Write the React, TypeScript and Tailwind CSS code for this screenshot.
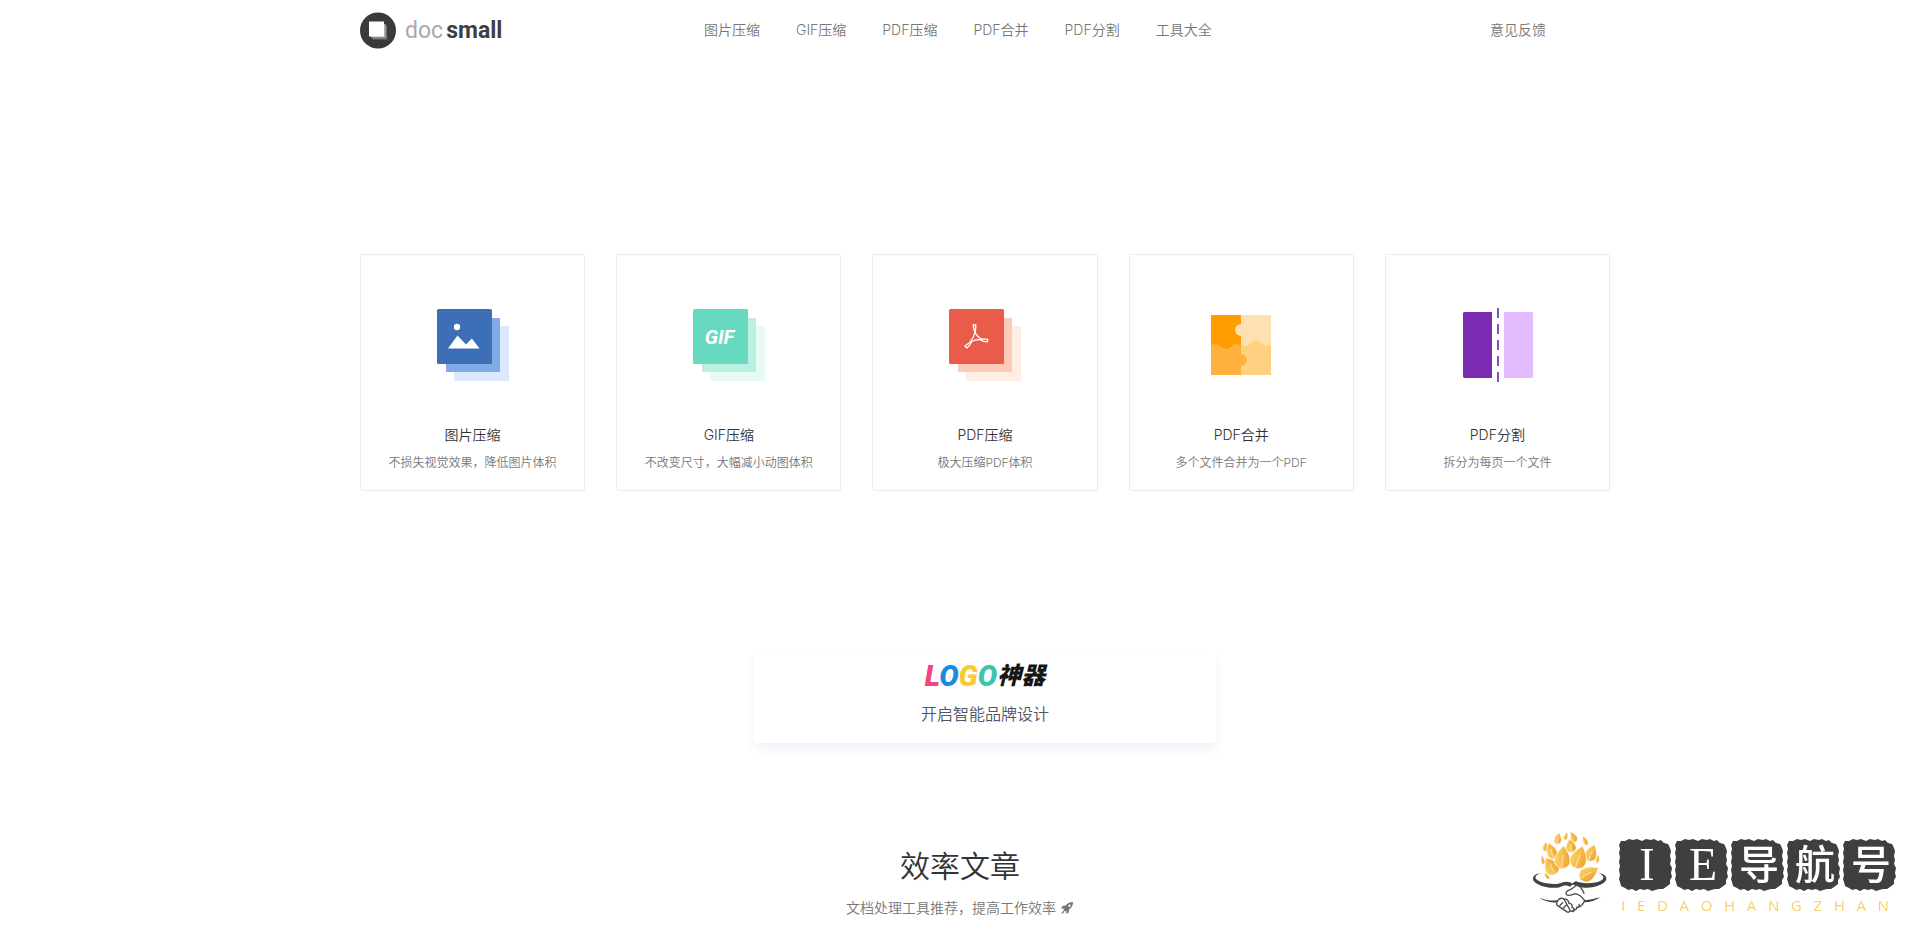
import type { ReactNode } from "react";

interface Tool {
  title: string;
  description: string;
  icon: ReactNode;
}

interface StackIconProps {
  front: string;
  middle: string;
  back: string;
  children: ReactNode;
}

function StackIcon({ front, middle, back, children }: StackIconProps) {
  return (
    <svg width="72" height="73" viewBox="0 0 72 73" aria-hidden="true">
      <rect x="17" y="17" width="55" height="55" rx="1" fill={back} />
      <rect x="9" y="9" width="54" height="54" rx="1" fill={middle} />
      <rect width="55" height="55" rx="1.5" fill={front} />
      {children}
    </svg>
  );
}

function ImageIcon() {
  return (
    <StackIcon front="#3c6fb5" middle="#80abe8" back="#dbe9fd">
      <circle cx="20" cy="18" r="3.2" fill="#fff" />
      <path d="M11 39.5 20.5 26.5 29 35.5 34.8 29.5 42.5 39.5Z" fill="#fff" />
    </StackIcon>
  );
}

function GifIcon() {
  return (
    <StackIcon front="#66d9c0" middle="#baf0e1" back="#e6fbf4">
      <text x="26.5" y="35" textAnchor="middle" fill="#fff" className="font-['Roboto',sans-serif] text-[20px] font-bold italic">
        GIF
      </text>
    </StackIcon>
  );
}

function PdfIcon() {
  return (
    <StackIcon front="#ea5c4a" middle="#fdcab8" back="#ffece5">
      <g fill="none" stroke="#fff" strokeWidth="1.3" strokeLinejoin="round">
        <path d="M24.2 16h2.6c.2 2.7-.3 5-.8 7.4-.8-2-1.8-4.7-1.8-7.4z" />
        <path d="M26 23c1.4 3.4 3.8 6 7 7 2 .3 4.3-.2 5.800.3l-.5 2.600c-3 .1-5.300-1.100-7.300-2.300" />
        <path d="M26 23c-.6 3.4-2.7 7.4-4.7 9.8-1.5 1.8-4.3 3-5.300 4.600l2 1.600c2.200-1.600 3.400-3.800 4.600-6" />
        <path d="M21.3 33c3-1.6 7.4-2.4 11.7-2.6" />
      </g>
    </StackIcon>
  );
}

function MergeIcon() {
  return (
    <svg width="60" height="60" viewBox="0 0 60 60" aria-hidden="true">
      <path d="M0 0h30v32H0z" fill="#ff9d00" />
      <path d="M30 0h30v32H30V21a6 6 0 1 1 0-12z" fill="#ffe0b0" />
      <path d="M30 30c3 1 6 1 8 0 2-6 12-6 14 0 3 1 5 1 8 0v30H30z" fill="#ffd080" />
      <path d="M0 30c3-1 6-1 8 0 2 6 12 6 14 0 2-1 5-1 8 0v9c1 1 2 1 3 1 4 3 4 7 0 10-1 0-2 0-3 1v9H0z" fill="#ffb140" />
      <path d="M9 31c3 5 9 5 12 0-3 1.500-9 1.500-12 0z" fill="#fb9a14" />
    </svg>
  );
}

function SplitIcon() {
  return (
    <svg width="71" height="74" viewBox="0 0 71 74" aria-hidden="true">
      <path d="M2 4h28v66H2l-1-1V5z" fill="#7c2cb2" />
      <path d="M42 4h28l1 1v64l-1 1H42z" fill="#e2bcff" />
      <path d="M36 0v74" stroke="#8257b0" strokeWidth="2" strokeDasharray="10 6" />
    </svg>
  );
}

function RocketIcon() {
  return (
    <svg width="14" height="14" viewBox="0 0 14 14" aria-hidden="true" fill="#777">
      <path
        fillRule="evenodd"
        d="M13 1C9.500 1 7.500 2.200 5.500 4.500L2.500 5 1 7.500l2.800-.1-.3 1.600L5 10.500l1.500-.4L6.200 13l2.500-1.500.5-3C12 6.500 13 4.500 13 1ZM9.500 3.500a1.200 1.200 0 1 1 0 2.400 1.200 1.200 0 0 1 0-2.400Z"
      />
      <path d="M3.200 9.500 1 13.300 4.600 11z" />
    </svg>
  );
}

const navItems = ["图片压缩", "GIF压缩", "PDF压缩", "PDF合并", "PDF分割", "工具大全"];

const tools: Tool[] = [
  { title: "图片压缩", description: "不损失视觉效果，降低图片体积", icon: <ImageIcon /> },
  { title: "GIF压缩", description: "不改变尺寸，大幅减小动图体积", icon: <GifIcon /> },
  { title: "PDF压缩", description: "极大压缩PDF体积", icon: <PdfIcon /> },
  { title: "PDF合并", description: "多个文件合并为一个PDF", icon: <MergeIcon /> },
  { title: "PDF分割", description: "拆分为每页一个文件", icon: <SplitIcon /> },
];

// x, y, length, width, rotation
const leaves = [
  [80, 80, 30, 14, 5],
  [142, 48, 26, 11, 20],
  [72, 120, 30, 11, -10],
  [237, 116, 28, 10, 10],
  [84, 168, 26, 10, -40],
  [118, 56, 36, 20, 12],
  [164, 51, 36, 18, -25],
  [199, 62, 32, 13, -25],
  [98, 93, 52, 28, -20],
  [156, 78, 42, 28, -10],
  [218, 99, 54, 32, 20],
  [97, 138, 58, 40, -30],
  [132, 112, 70, 42, 5],
  [181, 112, 72, 44, 18],
  [211, 160, 66, 38, 60],
];

const seals = [
  { char: "I", className: "font-['Liberation_Serif',serif] text-[46px]", baseline: 42 },
  { char: "E", className: "font-['Liberation_Serif',serif] text-[46px]", baseline: 42 },
  { char: "导", className: "text-[40px] font-medium", baseline: 41 },
  { char: "航", className: "text-[40px] font-medium", baseline: 41 },
  { char: "号", className: "text-[40px] font-medium", baseline: 41 },
];

function Logo() {
  return (
    <a href="#" className="flex items-center gap-2" aria-label="docsmall">
      <svg width="37" height="37" viewBox="0 0 37 37" aria-hidden="true">
        <circle cx="18" cy="18.5" r="18" fill="#3a3a3a" />
        <path d="M12.5 13.5H27v14H12.5z" fill="#777" />
        <path d="M11 12h14.5v13.5H11z" fill="#b0b0b0" />
        <path d="M9 9.5h15v15H9z" fill="#fff" />
      </svg>
      <span className="flex items-baseline gap-[3px] pt-0.5 font-['Roboto',sans-serif] text-[23px] leading-8">
        <span className="font-normal text-[#aaa]">doc</span>
        <span className="font-bold text-[#3f3f3f]">small</span>
      </span>
    </a>
  );
}

function ToolCard({ title, description, icon }: Tool) {
  return (
    <a href="#" className="flex flex-col items-center rounded-xs border border-[#ececec] pt-10 pb-[17px]">
      <span className="flex h-[100px] items-center justify-center">{icon}</span>
      <span className="mt-[30px] text-sm text-[#333]">{title}</span>
      <span className="mt-2 text-xs leading-5 text-[#777]">{description}</span>
    </a>
  );
}

function SiteBadge() {
  return (
    <div className="fixed right-[23px] bottom-[22px] flex items-start gap-3">
      <svg width="77" height="85" viewBox="40 30 231 255" aria-hidden="true">
        <defs>
          <linearGradient id="leaf" x1="0" x2="1">
            <stop offset="0" stopColor="#fbd36b" />
            <stop offset="1" stopColor="#f0a22e" />
          </linearGradient>
        </defs>
        {leaves.map(([x, y, length, width, angle]) => (
          <g key={`${x}-${y}`} transform={`translate(${x} ${y}) rotate(${angle})`}>
            <path
              d={`M0 ${-length / 2}C${width * 0.45} ${-length / 5} ${width} ${length / 3} 0 ${length / 2}C${-width} ${length / 3} ${-width * 0.45} ${-length / 5} 0 ${-length / 2}Z`}
              fill="url(#leaf)"
              stroke="#fff"
              strokeWidth="2"
            />
            {width > 19 && <path d={`M1 ${-length / 8}Q-3 ${length / 6} 0 ${length / 2}`} fill="none" stroke="#fff6dc" strokeWidth="2" />}
          </g>
        ))}
        <g fill="#424242">
          <path d="M68 158C32 164 34 190 78 200c24 5 42 5 54-2 10-3 14-1 22 2l9-8c-10-8-22-9-34-4-16 7-62 4-76-10-7-8 0-14 15-20z" />
          <path d="M238 158c36 6 34 32-10 42-20 4-34 5-48 0l-22-8 14-9c12 9 66 10 80-5 6-8 0-14-14-20z" />
          <path d="M62 233c18 8 36 9 58 8l-4 6c-20 1-38-3-54-14zM246 232c-16 3-30 8-48 9l-2 6c18 0 36-6 50-15z" />
        </g>
        <g fill="none" stroke="#4b4b4b" strokeWidth="4" strokeLinecap="round" strokeLinejoin="round">
          <path d="M180 194c-14 3-18 14-32 18-8 4-8 12 0 14 10 1 16-4 22-5 10 2 20 10 28 20-4 12-10 18-18 20" />
          <path d="M118 241c4-6 12-7 17-5 6 8 12 24 18 32 2 8-4 11-9 7l-27-18c-5-5-3-11 1-16z" />
          <path d="M136 238c10-3 14 6 15 12 8-1 11 7 9 13 8 0 9 8 4 12l-9-2M124 256l8-8M134 264l9-9M163 270c8 1 13-4 11-9M174 262c7 1 10-4 7-9M178 196c8 4 14 14 18 24" />
        </g>
      </svg>
      <div className="pt-2">
        <div className="flex gap-1">
          {seals.map((seal) => (
            <svg key={seal.char} width="52" height="53" viewBox="0 0 52 53" className="overflow-visible">
              <path
                d="M4 3 8 1l4 1 4-1 5 2 4-2 5 1 3-1 4 2 3-1 3 3 4 1 2 4 1 3-1 5 1 4-1 4 2 4-1 5 1 4-2 3v4l-4 3-3 2-4 0-4 1-3 1-4-2-4 1-4-1-4 2-4-2-4 1-3-2-4-2-1-4-1-3 1-4-1-5 1-4-1-4 1-5-1-4 1-4-1-4 2-4z"
                fill="#3f3f3f"
              />
              <text x="26" y={seal.baseline} textAnchor="middle" fill="#fff" className={seal.className}>
                {seal.char}
              </text>
            </svg>
          ))}
        </div>
        <div className="mt-1 flex justify-between pr-2 font-['Open_Sans',sans-serif] text-[15px] leading-5 font-medium text-[#f9d06b]">
          {"IEDAOHANGZHAN".split("").map((letter, index) => (
            <span key={index}>{letter}</span>
          ))}
        </div>
      </div>
    </div>
  );
}

export default function App() {
  return (
    <div
      lang="zh-CN"
      className="min-h-screen overflow-x-hidden bg-white font-['Inter','Noto_Sans_CJK_SC',sans-serif] font-[350]"
    >
      <header className="mx-auto flex h-[60px] max-w-[1200px] items-center pr-3.5 text-sm text-[#777]">
        <div className="w-[344px]">
          <Logo />
        </div>
        <nav className="flex gap-9">
          {navItems.map((item) => (
            <a key={item} href="#">
              {item}
            </a>
          ))}
        </nav>
        <a href="#" className="ml-auto">
          意见反馈
        </a>
      </header>

      <main className="mx-auto max-w-[1200px]">
        {/* Tools and banner run slightly past the container on the right */}
        <div className="-mr-[50px]">
          <section className="grid grid-cols-5 gap-[31px] pt-[194px]">
            {tools.map((tool) => (
              <ToolCard key={tool.title} {...tool} />
            ))}
          </section>

          <a
            href="#"
            className="mx-auto mt-[161px] flex w-[462px] flex-col items-center rounded-xs pt-1.5 pb-[17px] shadow-[0_6px_10px_rgba(90,90,200,0.08)]"
          >
            <span className="flex items-center leading-9 italic">
              <span className="font-['Roboto',sans-serif] text-[29px] font-black">
                <span className="text-[#f5457f]">L</span>
                <span className="text-[#1a8be0]">O</span>
                <span className="text-[#fcc92e]">G</span>
                <span className="text-[#3cc4ae]">O</span>
              </span>
              <span className="text-2xl leading-9 font-black text-[#161616]">神器</span>
            </span>
            <span className="mt-2 text-base text-[#4f5468]">开启智能品牌设计</span>
          </a>
        </div>

        <section className="pt-[101px] pb-4 text-center">
          <h2 className="text-3xl leading-[44px] text-[#333]">效率文章</h2>
          <p className="mt-2.5 flex items-center justify-center gap-1 text-sm text-[#777]">
            文档处理工具推荐，提高工作效率
            <RocketIcon />
          </p>
        </section>
      </main>

      <SiteBadge />
    </div>
  );
}
